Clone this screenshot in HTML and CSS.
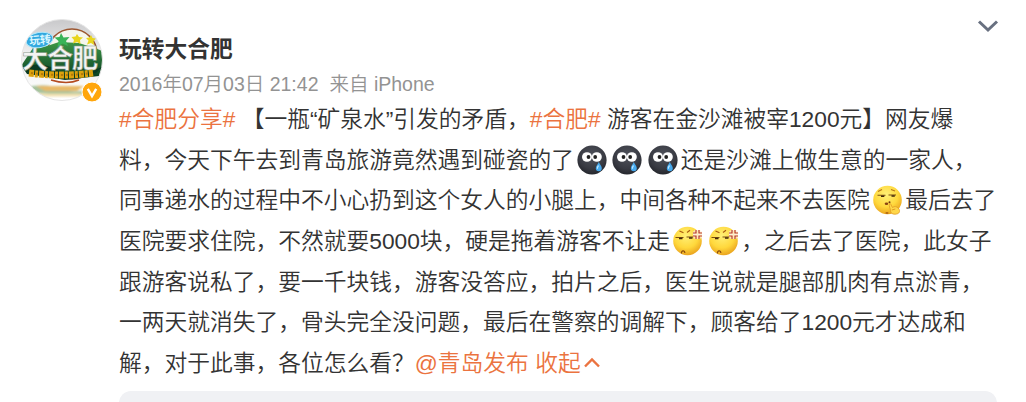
FILE: index.html
```html
<!DOCTYPE html>
<html lang="zh-CN">
<head>
<meta charset="utf-8">
<title>玩转大合肥</title>
<link rel="stylesheet" href="styles.css">
</head>
<body>
<svg width="0" height="0" class="defs">
  <defs>
    <radialGradient id="dark" cx="50%" cy="35%" r="65%"><stop offset="0" stop-color="#50535c"/><stop offset=".7" stop-color="#383a42"/><stop offset="1" stop-color="#24262c"/></radialGradient>
    <radialGradient id="gold" cx="45%" cy="32%" r="70%"><stop offset="0" stop-color="#fff077"/><stop offset=".6" stop-color="#ffd83c"/><stop offset="1" stop-color="#e9a01c"/></radialGradient>
    <symbol id="cry" viewBox="0 0 30 30">
      <circle cx="15" cy="15" r="14.6" fill="url(#dark)"/>
      <ellipse cx="10" cy="12" rx="5" ry="4.8" fill="#fff"/><ellipse cx="19.8" cy="12" rx="5" ry="4.8" fill="#fff"/>
      <circle cx="11.5" cy="12" r="1.9" fill="#222"/><circle cx="18.2" cy="12" r="1.9" fill="#222"/>
      <path d="M21.8 17c-1 2.500-3 4.200-3 6.300a3 3 0 0 0 6 0c0-2.100-2-3.800-3-6.300z" fill="#46a9ed"/>
      <path d="M21.500 20.500c-1 1.200-1.300 2.300-1 3.200" stroke="#b9e6ff" stroke-width="1.200" fill="none"/>
    </symbol>
    <symbol id="hush" viewBox="0 0 30 30">
      <circle cx="14.500" cy="15" r="14.300" fill="url(#gold)"/>
      <path d="M5 6.500l4-2M18 4.500l4 1.500" stroke="#b87518" stroke-width="1.100" fill="none"/>
      <path d="M4.500 10.300h8M15.500 10h7.500" stroke="#7d4f10" stroke-width="1.100"/>
      <path d="M8 11.300h3.300M18.500 11h3.300" stroke="#42270b" stroke-width="1.600"/>
      <ellipse cx="13.500" cy="18.800" rx="1.800" ry="1.200" fill="#8a4312"/><circle cx="16.500" cy="17.300" r="1" fill="#6f3710"/><ellipse cx="14" cy="28" rx="1.600" ry="1.100" fill="#b36c16"/>
      <path d="M16.500 18.500c1.500-.5 1.500 2 3 4 2-1.500 4-1 5.500.5 2.500 2 2 5.500-1.500 6-3.500.8-6-.8-6-3.500 0-2-2-4.500-1-7z" fill="#ffd749" stroke="#e09a25" stroke-width=".8"/>
      <path d="M18.800 25l3.500-1" stroke="#d88b17" stroke-width=".8"/>
    </symbol>
    <symbol id="angry" viewBox="0 0 30 30">
      <circle cx="14.500" cy="15" r="14.300" fill="url(#gold)"/>
      <path d="M6.500 5l4 1.800M14 6.500l3-2.300" stroke="#a95c12" stroke-width="1.100"/>
      <path d="M2.500 11.500h8M13.500 11h7" stroke="#7d4f10" stroke-width="1.200"/>
      <path d="M6 12.400h3.500M16 12h3.500" stroke="#42270b" stroke-width="1.500"/>
      <path d="M8.500 27.500c-.5-3.500 3.500-3.500 3.300-.5" stroke="#8a4b0c" stroke-width="1.200" fill="none"/>
      <path d="M20 7h3V4M26 4v3h3M29 10h-3v3M23 13v-3h-3" stroke="#fff0d8" stroke-width="2.800" fill="none"/>
      <path d="M20 7h3V4M26 4v3h3M29 10h-3v3M23 13v-3h-3" stroke="#b8381f" stroke-width="1.200" fill="none"/>
    </symbol>
  </defs>
</svg>
<article class="post">
  <div class="avatar">
    <svg class="photo" viewBox="0 0 82 82">
      <defs>
        <clipPath id="round"><circle cx="41" cy="41" r="40.500"/></clipPath>
        <linearGradient id="sky" x2="0" y2="1"><stop offset="0" stop-color="#c8c8ca"/><stop offset=".4" stop-color="#eeeeef"/><stop offset="1" stop-color="#fff"/></linearGradient>
        <linearGradient id="hill" x2="0" y2="1"><stop offset="0" stop-color="#3d9846"/><stop offset="1" stop-color="#07391f"/></linearGradient>
        <filter id="soft"><feGaussianBlur stdDeviation="1"/></filter>
      </defs>
      <g clip-path="url(#round)">
        <rect width="82" height="82" fill="url(#sky)"/>
        <circle cx="51" cy="35" r="25" fill="#f5f6ed" stroke="#9b5631" stroke-width="1.600"/>
        <path d="M0 47l12-18 14-2 12-4 20 1 24 8v20l-4 5-34 4-35-6z" fill="url(#hill)"/>
        <path d="M2 49q18-8 34 2t45-3l-6 6-35 6-34-5z" fill="#0b3a22"/>
        <path d="M40 14l2.500 4.500 6-.5-3.500 4 2 5-5.500-2.500-5 3.500 1-6-4-3.500 5-.5z" fill="#39b457"/>
        <path d="M56 15l2 3 4 .5-3 2.500.5 4-3.500-2-4 1.500 1-3.500-2.500-3 4-.5zM70 16l1.500 3 3.500.5-2.500 2.500.5 4-3-2-4 1.500 1.500-4-2.500-2.500 3.500-.5z" fill="#e8d51d"/>
        <text class="logo-big" x="1" y="49" textLength="76">大合肥</text>
        <ellipse cx="18.500" cy="21" rx="13.500" ry="7.500" transform="rotate(-10 18.500 21)" fill="#33a8df" stroke="#b0e8fb"/>
        <text class="logo-small" x="8" y="25" transform="rotate(-5 18 21)">玩转</text>
        <g class="strip"><path d="M8 54q32 4 64 0" stroke="#dca20d" stroke-width="7" stroke-dasharray="5 1 3 1"/><path d="M10 54q31 4 60 0" stroke="#b57808" stroke-width="2" stroke-dasharray="2 3"/><path d="M30 61q16 5 28 0" stroke="#b44b20" stroke-width="1.500"/></g>
        <g filter="url(#soft)">
          <path d="M3 69q20-6 38 1t38-5l-7 9-24 3-30-3z" fill="#a5c29c"/>
          <path d="M15 67h48l-7 5H24z" fill="#e8b968"/>
          <path d="M18 76h42" stroke="#f3e0ae" stroke-width="3"/>
        </g>
      </g>
      <circle cx="41" cy="41" r="40.500" fill="none" stroke="#e5e5e5"/>
    </svg>
    <svg class="badge" viewBox="0 0 22 22"><circle cx="11" cy="11" r="10" fill="#ffa60d" stroke="#fff"/><path d="M6.800 7.800l4.200 7.200 4.200-7.200" fill="none" stroke="#fff" stroke-width="2.400"/></svg>
  </div>
  <div class="main">
    <h1 class="name">玩转大合肥</h1>
    <div class="meta"><span>2016年07月03日 21:42</span><span>来自 iPhone</span></div>
    <div class="content">
      <div><a>#合肥分享#</a> 【一瓶“矿泉水”引发的矛盾，<a>#合肥#</a> 游客在金沙滩被宰1200元】网友爆</div>
      <div>料，今天下午去到青岛旅游竟然遇到碰瓷的了<svg class="emoji"><use href="#cry"/></svg><svg class="emoji"><use href="#cry"/></svg><svg class="emoji"><use href="#cry"/></svg>还是沙滩上做生意的一家人，</div>
      <div>同事递水的过程中不小心扔到这个女人的小腿上，中间各种不起来不去医院<svg class="emoji"><use href="#hush"/></svg>最后去了</div>
      <div>医院要求住院，不然就要5000块，硬是拖着游客不让走<svg class="emoji"><use href="#angry"/></svg><svg class="emoji"><use href="#angry"/></svg>，之后去了医院，此女子</div>
      <div>跟游客说私了，要一千块钱，游客没答应，拍片之后，医生说就是腿部肌肉有点淤青，</div>
      <div>一两天就消失了，骨头完全没问题，最后在警察的调解下，顾客给了1200元才达成和</div>
      <div>解，对于此事，各位怎么看？<a>@青岛发布</a> <a>收起<svg class="up" viewBox="0 0 18 12"><path d="M2 9.500l7-7 7 7"/></svg></a></div>
    </div>
    <div class="card"></div>
  </div>
  <svg class="more" viewBox="0 0 22 14"><path d="M2 2.500l9 8.500 9-8.500"/></svg>
</article>
</body>
</html>
```
FILE: styles.css
```css
body {
  margin: 0;
  background: #fff;
  overflow: hidden;
  font-family: "Liberation Sans", "Noto Sans CJK SC", sans-serif;
  color: #333;
}
.defs { display: block; height: 0; }
.post {
  display: flex;
  box-sizing: border-box;
  width: 1026px;
  height: 402px;
  padding: 19px 0 0 21px;
  overflow: hidden;
}
.avatar { position: relative; width: 82px; height: 82px; flex: none; }
.photo { display: block; width: 82px; height: 82px; }
.badge { position: absolute; right: 0; bottom: -2px; width: 22px; height: 22px; }
.logo-big {
  font: bold 26px "Noto Sans CJK SC", sans-serif;
  fill: #f4f4f2;
  stroke: #8b9a8e;
  stroke-width: .6px;
}
.logo-small { font: bold 11px "Noto Sans CJK SC", sans-serif; fill: #d9f7ff; }
.strip path { fill: none; }
.main { width: 878px; margin-left: 16px; flex: none; }
.name { margin: 14px 0 0; font-size: 22.75px; line-height: 32px; font-weight: bold; }
.meta { display: flex; gap: 11px; font-size: 19.5px; line-height: 28px; margin-top: 5px; color: #939393; font-weight: 350; }
.content { margin-top: 1px; font-size: 22.75px; line-height: 40.7px; white-space: nowrap; font-weight: 350; }
.content div { height: 40.7px; }
.content a { color: #eb7340; }
.emoji { width: 30px; height: 30px; margin: 0 2.8px; vertical-align: -7px; }
.up { width: 18px; height: 12px; margin-left: 2px; vertical-align: 2px; }
.up path { fill: none; stroke: #eb7340; stroke-width: 2.4; }
.card { height: 40px; margin-top: 7px; border-radius: 12px; background: #f0f1f4; }
.more { width: 22px; height: 14px; margin: 0 0 0 -20px; flex: none; }
.more path { fill: none; stroke: #687080; stroke-width: 3; }
```
